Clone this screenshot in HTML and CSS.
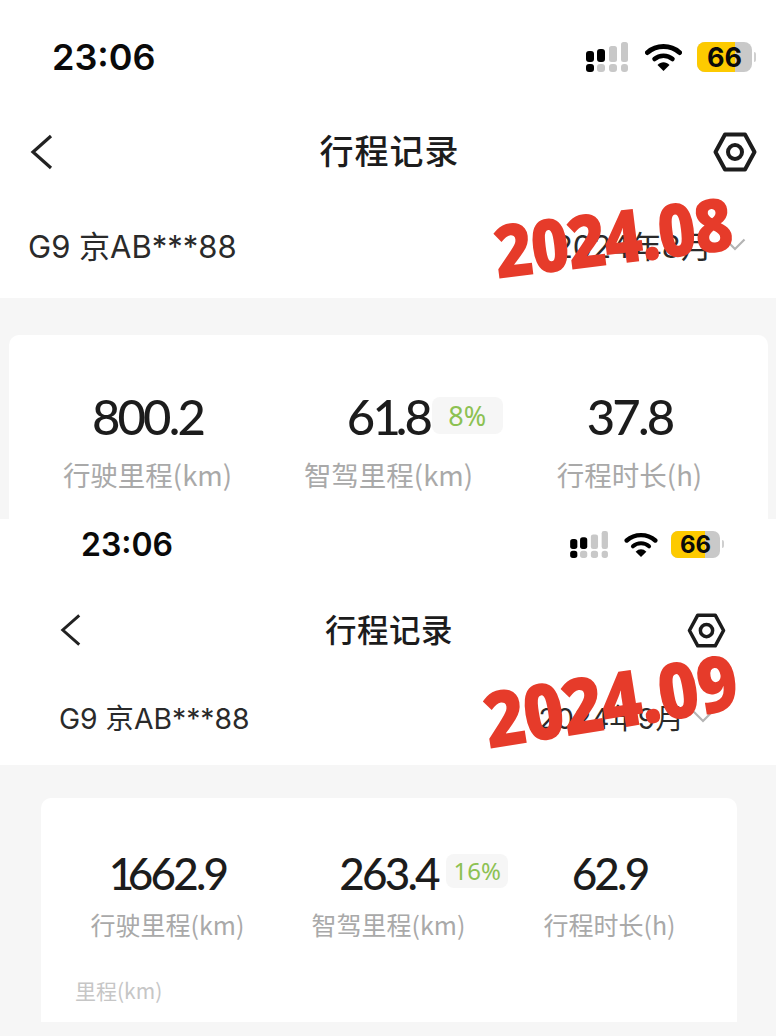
FILE: index.html
```html
<!DOCTYPE html>
<html lang="zh">
<head>
<meta charset="utf-8">
<title>行程记录</title>
<link rel="stylesheet" href="styles.css">
</head>
<body>
<svg class="defs" width="0" height="0" aria-hidden="true">
  <defs>
    <symbol id="signal" viewBox="0 0 43 30">
      <rect x="0" y="9" width="8" height="11" rx="3" fill="#000"/>
      <rect x="11" y="7" width="8" height="13" rx="3" fill="#000"/>
      <rect x="23" y="4" width="8" height="16" rx="2.5" fill="#c8c8c8"/>
      <rect x="35" y="0" width="7" height="20" rx="2.5" fill="#c8c8c8"/>
      <rect x="0" y="22" width="8" height="8" rx="3" fill="#000"/>
      <rect x="11" y="22" width="8" height="8" rx="3" fill="#c8c8c8"/>
      <rect x="23" y="22" width="8" height="8" rx="3" fill="#c8c8c8"/>
      <rect x="35" y="22" width="7" height="8" rx="3" fill="#c8c8c8"/>
    </symbol>
    <symbol id="wifi" viewBox="0 0 37 28">
      <path d="M2.500 9.500C11.500 1.500 25.500 1.500 34.500 9.500" fill="none" stroke="#000" stroke-width="5" stroke-linecap="round"/>
      <path d="M9.500 16C14.500 11.500 22.500 11.500 27.500 16" fill="none" stroke="#000" stroke-width="4.500" stroke-linecap="round"/>
      <path d="M12.500 22C16 18.300 21 18.300 24.500 22L18.500 28Z" fill="#000"/>
    </symbol>
    <symbol id="back" viewBox="0 0 24 36">
      <path d="M21 2L3 18L21 34" fill="none" stroke="#222" stroke-width="3.200"/>
    </symbol>
    <symbol id="hex" viewBox="0 0 44 40">
      <path d="M12 2.500H32L41.500 20L32 37.500H12L2.500 20Z" fill="none" stroke="#1c1c1c" stroke-width="4" stroke-linejoin="round"/>
      <circle cx="22" cy="20" r="7" fill="none" stroke="#1c1c1c" stroke-width="4"/>
    </symbol>
    <symbol id="chev" viewBox="0 0 22 13">
      <path d="M1.500 1.500L11 11L20.500 1.500" fill="none" stroke="#b4b4b4" stroke-width="2.200"/>
    </symbol>
  </defs>
</svg>

<section class="panel panel-a">
  <div class="status">
    <span class="time">23:06</span>
    <div class="indicators">
      <svg class="ic-signal"><use href="#signal"/></svg>
      <svg class="ic-wifi"><use href="#wifi"/></svg>
      <div class="battery"><div class="battery-body"><span class="battery-fill"></span><span class="battery-num">66</span></div><i class="battery-nub"></i></div>
    </div>
  </div>
  <div class="nav">
    <svg class="ic-back"><use href="#back"/></svg>
    <h1 class="title">行程记录</h1>
    <svg class="ic-hex"><use href="#hex"/></svg>
  </div>
  <div class="car">
    <span class="car-name">G9 京AB***88</span>
    <div class="date"><span>2024年8月</span><svg class="ic-chev"><use href="#chev"/></svg></div>
    <span class="stamp">2024.08</span>
  </div>
  <div class="sheet">
    <div class="card">
      <div class="stats">
        <div class="stat"><div class="value">800.2</div><div class="label">行驶里程(km)</div></div>
        <div class="stat"><div class="value">6<span class="tight">1</span>.8<span class="badge">8%</span></div><div class="label">智驾里程(km)</div></div>
        <div class="stat"><div class="value">37.8</div><div class="label">行程时长(h)</div></div>
      </div>
    </div>
  </div>
</section>

<section class="panel panel-b">
  <div class="status">
    <span class="time">23:06</span>
    <div class="indicators">
      <svg class="ic-signal"><use href="#signal"/></svg>
      <svg class="ic-wifi"><use href="#wifi"/></svg>
      <div class="battery"><div class="battery-body"><span class="battery-fill"></span><span class="battery-num">66</span></div><i class="battery-nub"></i></div>
    </div>
  </div>
  <div class="nav">
    <svg class="ic-back"><use href="#back"/></svg>
    <h1 class="title">行程记录</h1>
    <svg class="ic-hex"><use href="#hex"/></svg>
  </div>
  <div class="car">
    <span class="car-name">G9 京AB***88</span>
    <div class="date"><span>2024年9月</span><svg class="ic-chev"><use href="#chev"/></svg></div>
    <span class="stamp">2024.09</span>
  </div>
  <div class="sheet">
    <div class="card">
      <div class="stats">
        <div class="stat"><div class="value"><span class="tight">1</span>662.9</div><div class="label">行驶里程(km)</div></div>
        <div class="stat"><div class="value">263.4<span class="badge">16%</span></div><div class="label">智驾里程(km)</div></div>
        <div class="stat"><div class="value">62.9</div><div class="label">行程时长(h)</div></div>
      </div>
      <div class="axis">里程(km)</div>
    </div>
  </div>
</section>
</body>
</html>
```
FILE: styles.css
```css
* { box-sizing: border-box; }
html, body { margin: 0; padding: 0; background: #fff; }
body {
  width: 776px;
  height: 1036px;
  overflow: hidden;
  font-family: "Noto Sans CJK SC", "Noto Sans", sans-serif;
  color: #1c1c1c;
}
.defs { position: absolute; }
.panel { display: flex; flex-direction: column; background: #fff; overflow: hidden; }
.panel-a { height: 519px; }
.panel-b { height: 517px; }

.status { display: flex; justify-content: space-between; align-items: center; }
.time { font-family: Inter, sans-serif; font-weight: 600; color: #0a0a0a; }
.indicators { display: flex; align-items: center; }
.battery { display: flex; align-items: center; gap: 2px; }
.battery-body { position: relative; display: flex; align-items: center; justify-content: center; background: #c9c9c9; overflow: hidden; }
.battery-fill { position: absolute; left: 0; top: 0; bottom: 0; background: #fdca00; }
.battery-num { position: relative; font-family: Inter, sans-serif; font-weight: 700; color: #0a0a0a; }
.battery-nub { display: block; width: 2px; background: #cfcfcf; border-radius: 0 2px 2px 0; }

.nav { display: grid; grid-template-columns: 1fr auto 1fr; align-items: center; }
.ic-hex { justify-self: end; }
.title { margin: 0 8px 0 0; font-weight: 500; color: #1c1c1c; }

.car { position: relative; display: flex; justify-content: space-between; align-items: center; }
.car-name, .date { font-family: Inter, "Noto Sans CJK SC", sans-serif; color: #2a2a2a; }
.date { display: flex; align-items: center; }
.stamp {
  position: absolute;
  font-family: "Open Sans", sans-serif;
  font-weight: 800;
  color: #e63b2a;
  line-height: 1;
  white-space: nowrap;
  transform-origin: left center;
}

.sheet { flex: 1; background: #f6f6f6; }
.card { background: #fff; border-radius: 10px 10px 0 0; height: 100%; }
.stats { display: grid; }
.stat { display: flex; flex-direction: column; align-items: center; }
.value {
  position: relative;
  font-family: Lato, sans-serif;
  font-weight: 500;
  color: #1c1c1c;
  line-height: 1;
}
.badge {
  position: absolute;
  display: flex;
  align-items: center;
  justify-content: center;
  background: #f6f6f6;
  color: #8cc152;
  font-family: "Noto Sans", sans-serif;
  font-weight: 400;
  letter-spacing: 0;
  border-radius: 8px;
}
.label { color: #a9a9a9; white-space: nowrap; }
.axis { color: #c6c6c6; }

/* upper screenshot */
.panel-a .status { height: 114px; padding: 0 20px 0 52px; }
.panel-a .time { font-size: 36px; }
.panel-a .indicators { gap: 15px; }
.panel-a .ic-signal { width: 43px; height: 30px; margin-right: 1px; }
.panel-a .ic-wifi { width: 37px; height: 28px; }
.panel-a .battery-body { width: 55px; height: 30px; border-radius: 8px; }
.panel-a .battery-fill { width: 38px; }
.panel-a .battery-num { font-size: 27px; }
.panel-a .battery-nub { height: 10px; }
.panel-a .nav { height: 76px; padding: 0 19px 0 30px; }
.panel-a .ic-back { width: 24px; height: 36px; }
.panel-a .ic-hex { width: 44px; height: 40px; }
.panel-a .title { font-size: 34px; letter-spacing: 1px; padding-bottom: 5px; }
.panel-a .car { height: 108px; padding: 0 30px 0 28px; }
.panel-a .car-name { font-size: 31px; }
.panel-a .date { font-size: 31px; gap: 12px; }
.panel-a .ic-chev { width: 22px; height: 13px; }
.panel-a .stamp { left: 494px; top: 24px; font-size: 74px; letter-spacing: -2px; transform: rotate(-7deg) scaleX(0.89); }
.panel-a .sheet { padding: 37px 8px 0 9px; }
.panel-a .stats { grid-template-columns: repeat(3, 241px); padding: 57px 0 0 18px; }
.panel-a .value { font-size: 49px; letter-spacing: -2.8px; }
.panel-a .tight { letter-spacing: -5px; }
.panel-a .badge { left: 85px; top: 5px; width: 71px; height: 37px; font-size: 27px; }
.panel-a .label { font-size: 27.500px; margin-top: 13px; line-height: 40px; }

/* lower screenshot */
.panel-b .status { height: 50px; padding: 0 52px 0 81px; }
.panel-b .time { font-size: 32px; }
.panel-b .indicators { gap: 13px; }
.panel-b .ic-signal { width: 39px; height: 27px; margin-right: 2px; }
.panel-b .ic-wifi { width: 34px; height: 25px; }
.panel-b .battery-body { width: 49px; height: 27px; border-radius: 7px; }
.panel-b .battery-fill { width: 34px; }
.panel-b .battery-num { font-size: 24px; }
.panel-b .battery-nub { height: 8px; }
.panel-b .nav { height: 74px; margin-top: 24px; padding: 0 50px 0 60px; }
.panel-b .ic-back { width: 22px; height: 34px; }
.panel-b .ic-hex { width: 39px; height: 35px; }
.panel-b .title { font-size: 31.500px; letter-spacing: 0.5px; padding-bottom: 4px; }
.panel-b .car { height: 98px; padding: 0 62px 0 59px; }
.panel-b .car-name { font-size: 28.300px; }
.panel-b .date { font-size: 28.500px; gap: 8px; }
.panel-b .ic-chev { width: 22px; height: 13px; }
.panel-b .stamp { left: 484px; top: 13px; font-size: 78px; letter-spacing: -2px; transform: rotate(-9deg) scaleX(0.9); }
.panel-b .sheet { padding: 33px 39px 14px 41px; }
.panel-b .stats { grid-template-columns: repeat(3, 221px); padding: 53px 0 0 16px; }
.panel-b .value { font-size: 44px; letter-spacing: -2.8px; }
.panel-b .tight { letter-spacing: -6.500px; }
.panel-b .badge { left: 107px; top: 3px; width: 62px; height: 34px; font-size: 24px; }
.panel-b .label { font-size: 25px; margin-top: 10px; line-height: 38px; }
.panel-b .axis { font-size: 21px; margin: 32px 0 0 34px; }
```
